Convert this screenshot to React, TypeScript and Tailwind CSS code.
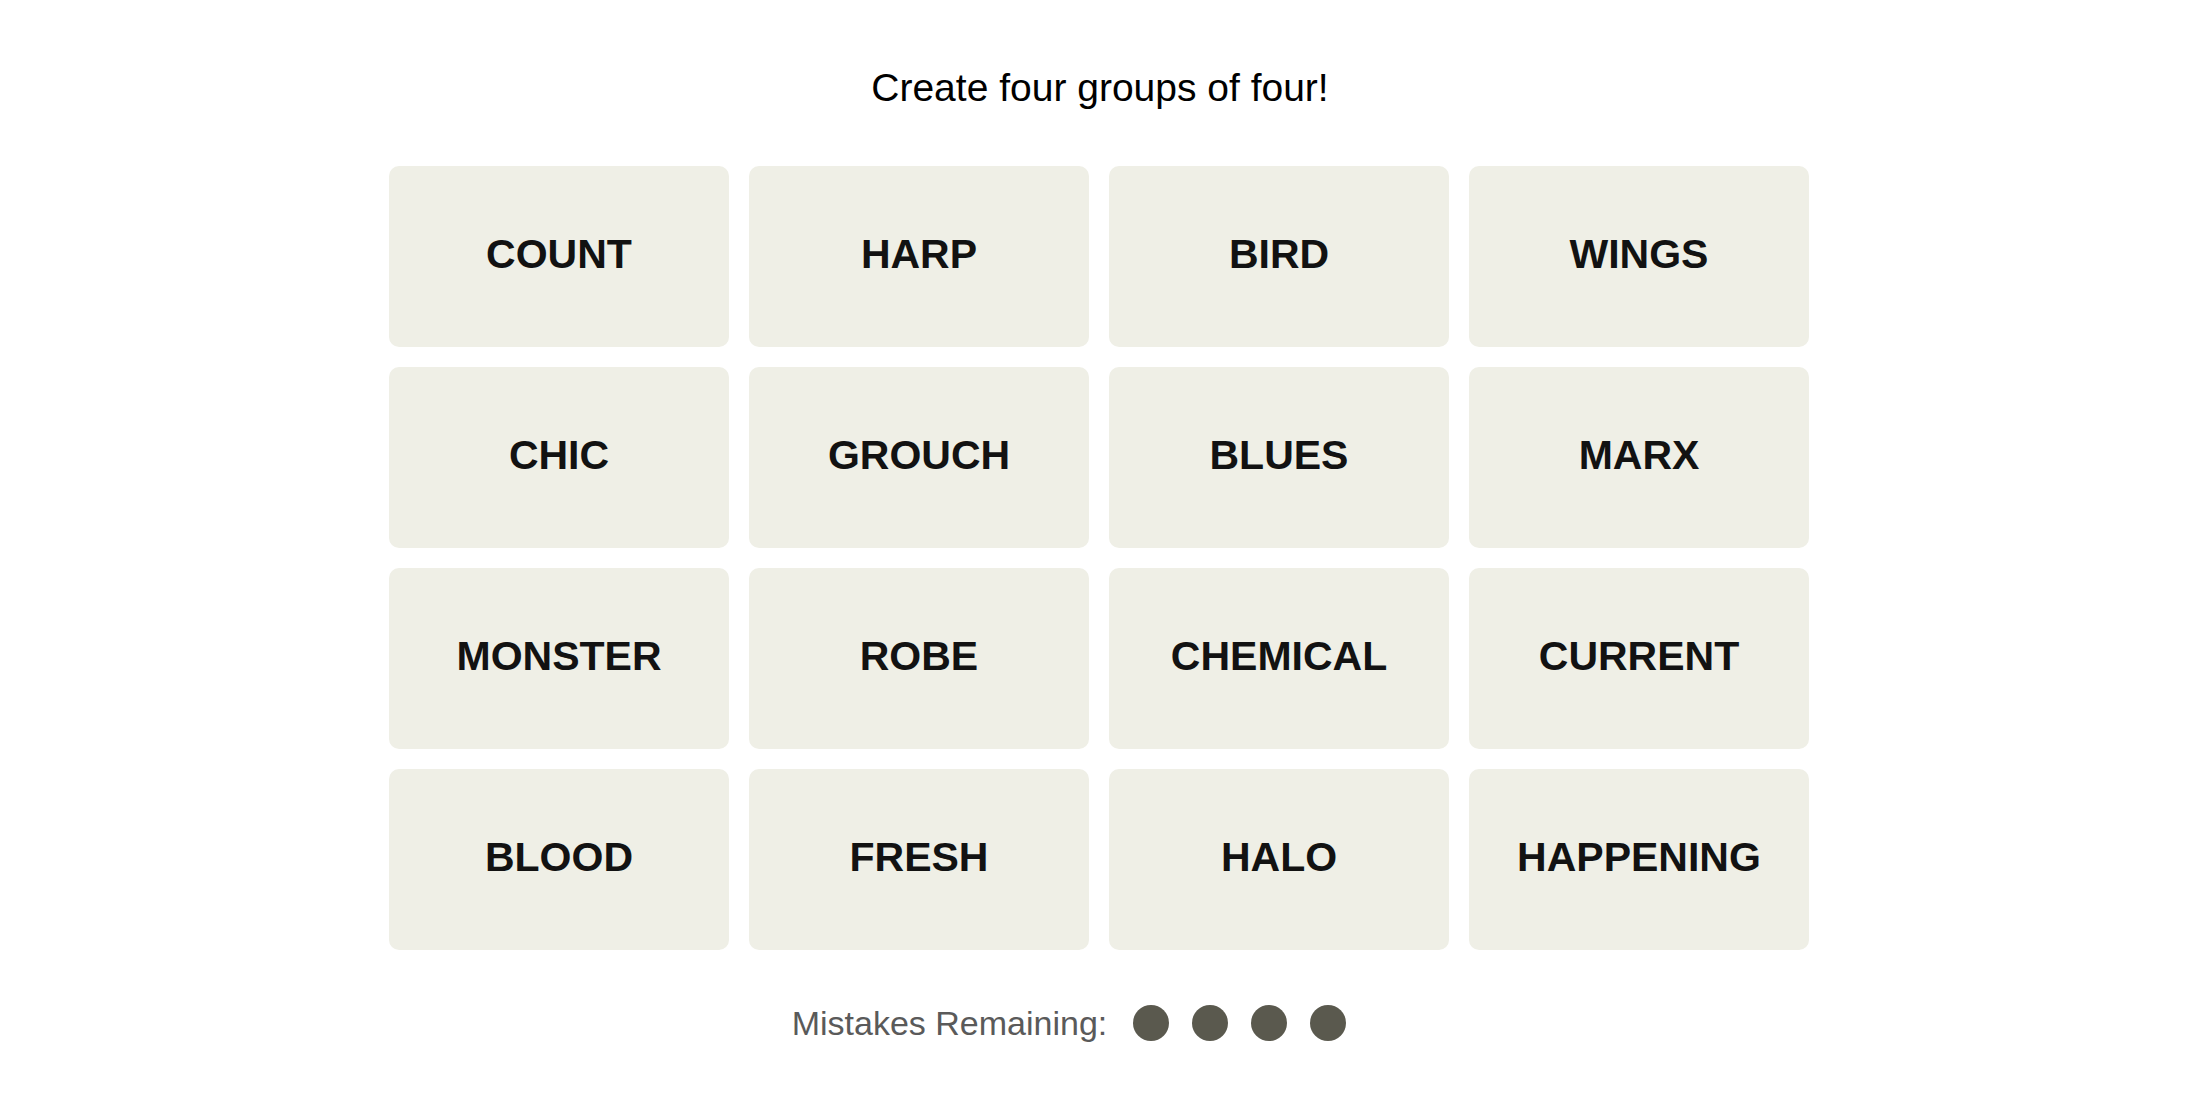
const words = [
  "COUNT", "HARP", "BIRD", "WINGS",
  "CHIC", "GROUCH", "BLUES", "MARX",
  "MONSTER", "ROBE", "CHEMICAL", "CURRENT",
  "BLOOD", "FRESH", "HALO", "HAPPENING",
]

export default function App() {
  return (
    <div className="min-h-screen bg-white font-['Liberation_Sans',Arial,sans-serif] text-[#121212]">
      {/* Prompt */}
      <p className="pt-[65px] text-center text-[39px] leading-[46px] text-black">
        Create four groups of four!
      </p>

      {/* Board */}
      <div className="mx-auto mt-[55px] grid w-[1420px] -translate-x-[1px] grid-cols-4 gap-x-[20px] gap-y-[20px]">
        {words.map((w) => (
          <button
            key={w}
            className="flex h-[181px] items-center justify-center rounded-[10px] bg-[#efefe6] pb-[4px] text-[41px] font-bold leading-none text-[#121212]"
          >
            {w}
          </button>
        ))}
      </div>

      {/* Mistakes */}
      <div className="mt-[55px] flex h-[36px] items-start justify-center pr-[62px]">
        <span className="text-[34px] leading-[36px] text-[#5a5a5a]">Mistakes Remaining:</span>
        <div className="ml-[26px] flex gap-[23px]">
          {[0, 1, 2, 3].map((i) => (
            <span key={i} className="h-[36px] w-[36px] rounded-full bg-[#5a594e]" />
          ))}
        </div>
      </div>
    </div>
  )
}
